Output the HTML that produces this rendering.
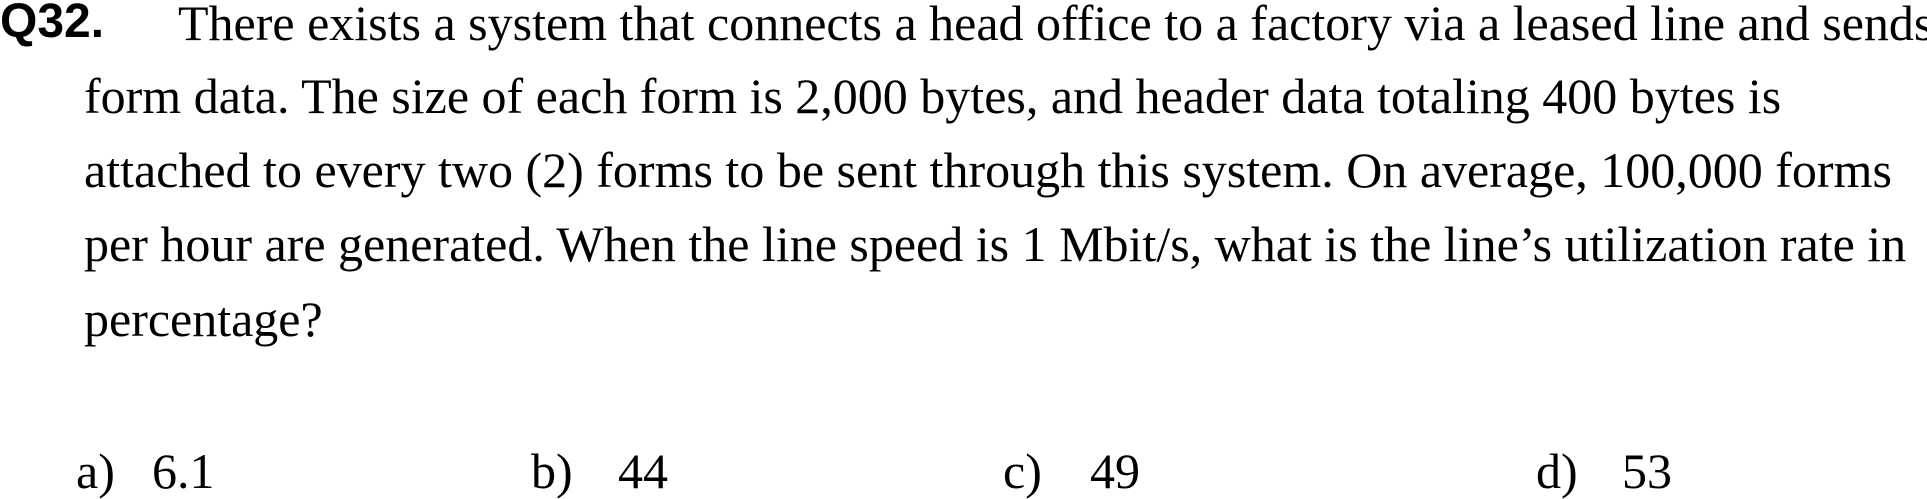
<!DOCTYPE html>
<html><head><meta charset="utf-8"><style>
body{margin:0;width:1927px;height:496px;background:#fff;overflow:hidden;position:relative;font-family:"Liberation Serif",serif;color:#000}
.l{position:absolute;font-size:50px;line-height:1;white-space:nowrap}
.q{position:absolute;left:0;top:-2px;font-family:"Liberation Sans",sans-serif;font-weight:bold;font-size:48px;line-height:1}
</style></head><body>
<div class="q">Q32.</div>
<div class="l" style="left:178px;top:-2px">There exists a system that connects a head office to a factory via a leased line and sends</div>
<div class="l" style="left:84px;top:71px">form data. The size of each form is 2,000 bytes, and header data totaling 400 bytes is</div>
<div class="l" style="left:84px;top:145px">attached to every two (2) forms to be sent through this system. On average, 100,000 forms</div>
<div class="l" style="left:84px;top:219px">per hour are generated. When the line speed is 1 Mbit/s, what is the line’s utilization rate in</div>
<div class="l" style="left:84px;top:294px">percentage?</div>
<div class="l" style="left:76px;top:446px">a)</div><div class="l" style="left:152px;top:446px">6.1</div>
<div class="l" style="left:531px;top:446px">b)</div><div class="l" style="left:618px;top:446px">44</div>
<div class="l" style="left:1003px;top:446px">c)</div><div class="l" style="left:1090px;top:446px">49</div>
<div class="l" style="left:1536px;top:446px">d)</div><div class="l" style="left:1622px;top:446px">53</div>
</body></html>
